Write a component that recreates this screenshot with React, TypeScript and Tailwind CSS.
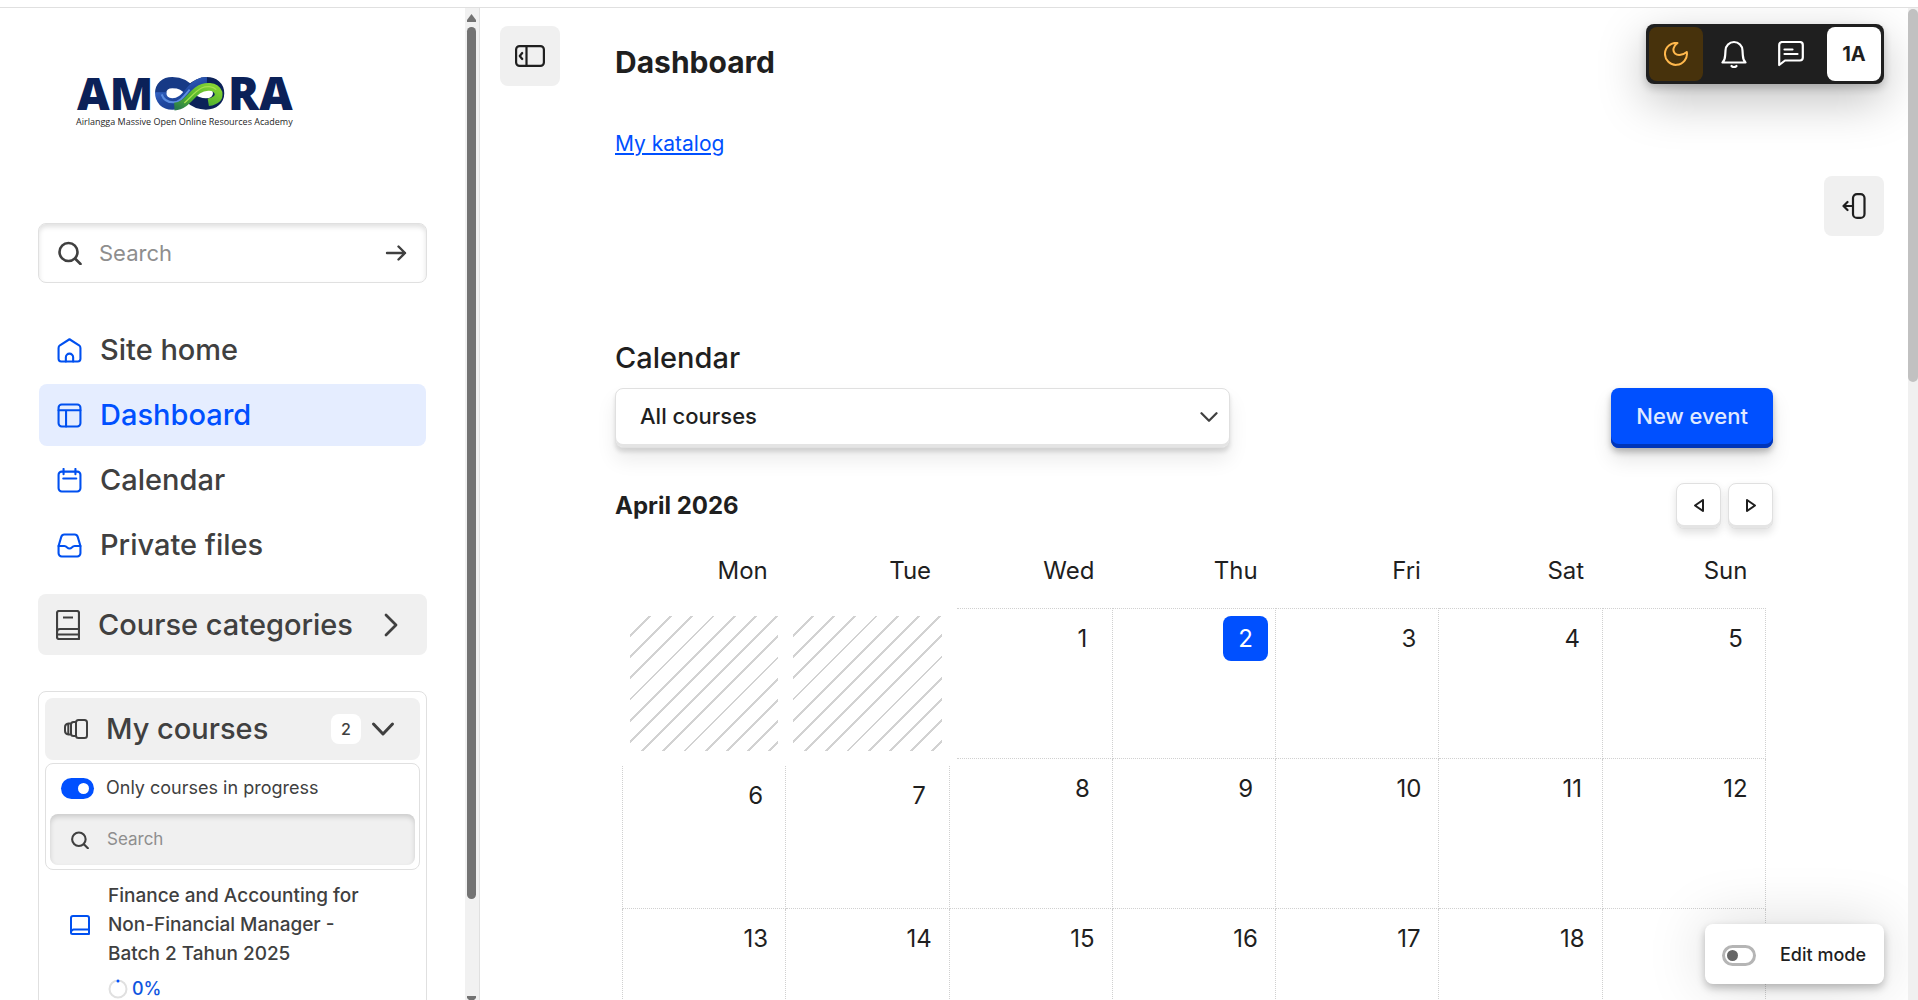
import React, { useState } from 'react';

interface IconProps {
  className?: string;
  strokeWidth?: number;
  children?: React.ReactNode;
}

const Icon: React.FC<IconProps> = ({ className, strokeWidth = 2, children }) => (
  <svg
    viewBox="0 0 24 24"
    fill="none"
    stroke="currentColor"
    strokeWidth={strokeWidth}
    strokeLinecap="round"
    strokeLinejoin="round"
    aria-hidden="true"
    className={className}
  >
    {children}
  </svg>
);

const navItems = [
  {
    label: 'Site home',
    icon: (
      <>
        <path d="M1.5 9.5Q1.5 8 2.8 7L12 1.2 21.2 7Q22.5 8 22.5 9.5V20a2.5 2.5 0 0 1-2.5 2.5H4A2.5 2.5 0 0 1 1.5 20z" />
        <path d="M8.5 22.5v-4a3.5 3.5 0 0 1 7 0v4" />
      </>
    ),
  },
  {
    label: 'Dashboard',
    icon: (
      <>
        <rect x="1.5" y="1.5" width="21" height="21" rx="3" />
        <path d="M1.5 7h21M8.7 7v15.5" />
      </>
    ),
  },
  {
    label: 'Calendar',
    icon: (
      <>
        <rect x="1.5" y="3.5" width="21" height="19" rx="3" />
        <path d="M6.3 .9v5M17.7 .9v5M6 10h12.5" />
      </>
    ),
  },
  {
    label: 'Private files',
    icon: (
      <>
        <path d="M1.5 12.5 4 4q.8-2.5 3-2.5h10q2.2 0 3 2.5l2.5 8.5v7a3 3 0 0 1-3 3h-15a3 3 0 0 1-3-3z" />
        <path d="M1.5 12.5h5.5q1.5 0 2.5 1.2 2.5 2.3 5 0 1-1.2 2.5-1.2h5.5" />
      </>
    ),
  },
];

const weekDays = ['Mon', 'Tue', 'Wed', 'Thu', 'Fri', 'Sat', 'Sun'];

const weeks: (number | null)[][] = [
  [null, null, 1, 2, 3, 4, 5],
  [6, 7, 8, 9, 10, 11, 12],
  [13, 14, 15, 16, 17, 18, 19],
];

const today = 2;

const Logo: React.FC = () => (
  <svg viewBox="0 0 226 54" className="w-[226px] h-[54px] overflow-visible" role="img" aria-label="AMOORA">
    <defs>
      <linearGradient id="logo-blue" x1="0" y1="0" x2="1" y2="1">
        <stop offset="0" stopColor="#3f73d6" />
        <stop offset="0.5" stopColor="#1f479f" />
        <stop offset="1" stopColor="#173a86" />
      </linearGradient>
      <linearGradient id="logo-green" x1="0" y1="1" x2="1" y2="0">
        <stop offset="0" stopColor="#2b7d4a" />
        <stop offset="0.4" stopColor="#4fb02f" />
        <stop offset="1" stopColor="#86d532" />
      </linearGradient>
    </defs>
    <text x="1" y="33" fontSize="45" fontWeight="800" fill="#0b2158" className="font-['Open_Sans',sans-serif]">AM</text>
    <g transform="translate(79 0) scale(0.333)" fill="none" strokeLinecap="butt">
      <path d="M105 62C120 76 135 81 153 81C176 81 191 68 191 49C191 29 176 17 155 17C133 17 119 28 105 41" stroke="#0b2158" strokeWidth="34" />
      <path d="M108 46C92 24 76 17 52 17C30 17 17 30 17 49" stroke="#173a86" strokeWidth="34" />
      <path d="M17 46C17 68 30 81 52 81C80 81 94 60 111 40C124 24 138 17 156 17" stroke="url(#logo-blue)" strokeWidth="34" />
      <path d="M20 52C26 70 40 76 55 76C76 76 90 54 104 38" stroke="#5b8de0" strokeWidth="6" />
      <path d="M58 89C92 87 106 56 128 40C150 25 182 25 191 48C193 62 184 72 160 76" stroke="url(#logo-green)" strokeWidth="23" />
      <path d="M88 78C108 60 122 42 140 33C156 26 174 28 184 38" stroke="#a5e04f" strokeWidth="4" />
    </g>
    <text x="152" y="33" fontSize="46" fontWeight="800" fill="#0b2158" className="font-['Open_Sans',sans-serif]">RA</text>
    <text x="0" y="48" fontSize="9" fill="#1f1f1f" className="font-['Open_Sans',sans-serif]">
      Airlangga Massive Open Online Resources Academy
    </text>
  </svg>
);

const Sidebar: React.FC = () => {
  const [onlyInProgress, setOnlyInProgress] = useState(true);

  return (
    <aside className="flex w-[480px] shrink-0 border-r border-[#e0e0e0]">
      <div className="flex-1 overflow-hidden px-[38px]">
        <a href="#" className="block pl-[38px] pt-[69px]">
          <Logo />
        </a>

        <form className="mt-[92px] flex h-[60px] items-center rounded-lg border border-[#e0e0e0] pr-[18px] pl-[19px] shadow-[inset_0_3px_5px_rgba(0,0,0,0.12)]">
          <Icon className="h-6 w-6 shrink-0 text-[#404040]" strokeWidth={2.6}>
            <circle cx="10.5" cy="11" r="9" />
            <path d="m17.5 18 5 5" />
          </Icon>
          <input
            aria-label="Search"
            placeholder="Search"
            className="ml-[17px] min-w-0 flex-1 bg-transparent text-[22px] text-[#404040] outline-none placeholder:text-[#8e8e8e]"
          />
          <button type="submit" aria-label="Go" className="text-[#404040]">
            <Icon className="h-6 w-6" strokeWidth={2.4}>
              <path d="M3 12h18M14.5 5.5 21 12l-6.5 6.5" />
            </Icon>
          </button>
        </form>

        <nav className="mt-9 flex flex-col gap-[3px] px-px">
          {navItems.map(item => (
            <a
              key={item.label}
              href="#"
              className={`flex h-[62px] items-center gap-[18px] rounded-lg px-[18px] text-[29px] font-medium ${
                item.label === 'Dashboard' ? 'bg-[#e5edff] text-[#0050ff]' : 'text-[#404040]'
              }`}
            >
              <Icon className="h-[25px] w-[25px] shrink-0 text-[#0050f0]">{item.icon}</Icon>
              {item.label}
            </a>
          ))}
        </nav>

        <button className="mt-[18px] flex h-[61px] w-full items-center rounded-lg bg-[#f0f0f0] pl-[18px] pr-6 text-[29px] font-medium text-[#404040]">
          <svg viewBox="0 0 24 30" fill="none" stroke="currentColor" strokeWidth="2.2" strokeLinejoin="round" className="h-[30px] w-6 shrink-0" aria-hidden="true">
            <path d="M1 27V3a2 2 0 0 1 2-2h18a2 2 0 0 1 2 2v26H3a2 2 0 0 1-2-2v-5a3 3 0 0 1 3-3h19M1 24.5h22M7 7.5h10" />
          </svg>
          <span className="ml-[18px] flex-1 text-left">Course categories</span>
          <Icon className="h-6 w-6" strokeWidth={2.8}>
            <path d="m7 2 10 10L7 22" />
          </Icon>
        </button>

        <section className="mt-9 rounded-lg border border-[#e0e0e0] p-1.5">
          <button className="flex h-[62px] w-full items-center rounded-lg bg-[#f0f0f0] pl-[19px] pr-[25px] text-[29px] font-medium text-[#404040]">
            <svg viewBox="0 0 24 20" fill="none" stroke="currentColor" strokeWidth="2" strokeLinejoin="round" className="h-5 w-6 shrink-0" aria-hidden="true">
              <rect x="12" y="1" width="11" height="18" rx="2.5" />
              <path d="M12 3H9.5Q7 3 7 5.5v9Q7 17 9.5 17H12M7 4.5H4.5Q1 5 1 8v4q0 3 3.5 3.5H7M4.3 5v10.2" />
            </svg>
            <span className="ml-[18px] flex-1 text-left">My courses</span>
            <span className="flex h-[30px] w-[30px] items-center justify-center rounded-lg bg-white text-base">2</span>
            <Icon className="ml-2.5 h-6 w-6" strokeWidth={3}>
              <path d="m2.5 7 9.5 10 9.5-10" />
            </Icon>
          </button>

          <div className="mt-[3px] rounded-lg border border-[#e0e0e0] p-1">
            <label className="flex h-[46px] items-center gap-3 pb-1.5 pl-[11px] text-lg text-[#404040]">
              <input
                type="checkbox"
                role="switch"
                checked={onlyInProgress}
                onChange={e => setOnlyInProgress(e.target.checked)}
                className="h-[21px] w-[33px] appearance-none rounded-full bg-gray-400 p-[5px] before:block before:h-[11px] before:w-[11px] before:rounded-full before:bg-white checked:bg-[#0050ff] checked:before:translate-x-3"
              />
              Only courses in progress
            </label>
            <div className="flex h-[51px] items-center rounded-lg bg-[#f0f0f0] pl-[21px] pr-4 shadow-[inset_0_3px_5px_rgba(0,0,0,0.15)]">
              <Icon className="h-[18px] w-[18px] shrink-0 text-[#404040]" strokeWidth={2.8}>
                <circle cx="10.5" cy="11" r="9" />
                <path d="m17.5 18 5 5" />
              </Icon>
              <input
                aria-label="Search courses"
                placeholder="Search"
                className="ml-[18px] min-w-0 flex-1 bg-transparent text-[17px] outline-none placeholder:text-[#8e8e8e]"
              />
            </div>
          </div>

          <a href="#" className="mt-[11px] flex items-center pl-[25px] text-[19px] leading-[29px] font-medium text-[#404040]">
            <svg viewBox="0 0 20 20" fill="none" stroke="currentColor" strokeWidth="2" strokeLinejoin="round" className="h-5 w-5 shrink-0 text-[#0050f0]" aria-hidden="true">
              <path d="M1 17.5V3a2 2 0 0 1 2-2h14a2 2 0 0 1 2 2v16H2.5A1.5 1.5 0 0 1 1 17.5a3 3 0 0 1 2.5-3H19" />
            </svg>
            <span className="ml-[18px] w-[260px]">Finance and Accounting for Non-Financial Manager - Batch 2 Tahun 2025</span>
          </a>
          <div className="mt-1.5 flex items-center gap-1 pl-[63px] text-lg leading-[29px] font-medium text-[#0f56e0]">
            <svg viewBox="0 0 20 20" fill="none" className="h-5 w-5" aria-hidden="true">
              <circle cx="10" cy="10" r="8.5" stroke="#e0e0e0" strokeWidth="2" />
              <circle cx="10" cy="2" r="1.5" fill="#0050ff" />
            </svg>
            0%
          </div>
        </section>
      </div>

      <div className="flex w-3.5 flex-col items-center bg-[#f1f1f1] pt-1.5 pr-0.5" aria-hidden="true">
        <svg viewBox="0 0 9 8" className="h-2 w-[9px] shrink-0">
          <path d="M4.5 0 9 6v2H0V6z" fill="#737373" />
        </svg>
        <div className="mt-[5px] h-[872px] w-[9px] shrink-0 rounded-full bg-[#737373]" />
        <div className="flex-1" />
        <svg viewBox="0 0 9 4" className="h-1 w-[9px] shrink-0">
          <path d="M0 0h9v2L7 4H2L0 2z" fill="#737373" />
        </svg>
      </div>
    </aside>
  );
};

const CalendarTable: React.FC = () => (
  <div className="mt-[18px] pr-[7px]">
    <table className="w-full table-fixed border-collapse text-2xl">
      <thead>
        <tr>
          {weekDays.map(day => (
            <th key={day} scope="col" className="h-[61px] pr-[18px] text-right align-top leading-[48px] font-normal">
              {day}
            </th>
          ))}
        </tr>
      </thead>
      <tbody>
        {weeks.map((week, i) => (
          <tr key={i}>
            {week.map((day, j) =>
              day === null ? (
                <td
                  key={j}
                  className="border-[15px] border-white bg-[repeating-linear-gradient(135deg,transparent_0_13px,#d2d2d2_13px_15px)] bg-clip-padding"
                />
              ) : (
                <td key={j} className="h-[150px] border border-dotted border-[#d0d0d0] pt-[7px] pr-[7px] align-top">
                  <a
                    href="#"
                    className={`ml-auto flex h-[45px] w-[45px] items-center justify-center rounded-lg pt-0.5 ${
                      day === today ? 'bg-[#0050ff] text-white' : ''
                    }`}
                  >
                    {day}
                  </a>
                </td>
              )
            )}
          </tr>
        ))}
      </tbody>
    </table>
  </div>
);

const UserBar: React.FC = () => (
  <div className="absolute top-4 right-6 flex h-[60px] items-center rounded-lg bg-[#1f1f1f] p-[3px] text-white shadow-[0_4px_8px_rgba(0,0,0,0.2),0_16px_48px_rgba(0,0,0,0.25)]">
    <button aria-label="Dark mode" className="flex h-[54px] w-[54px] items-center justify-center rounded-lg bg-[#47320c] text-[#ffb84d]">
      <Icon className="h-6 w-6">
        <path d="M13.5 1A11 11 0 1 0 22.8 10C19 13 14 14 11 11.5C8 8.5 9.5 4 13.5 1z" />
      </Icon>
    </button>
    <button aria-label="Notifications" className="flex h-[54px] w-[62px] items-center justify-center">
      <svg viewBox="0 0 26 28" fill="none" stroke="currentColor" strokeWidth="2.2" strokeLinejoin="round" strokeLinecap="round" className="h-7 w-[26px]" aria-hidden="true">
        <path d="M1.5 22.5h23Q22 20 21.8 15l-.3-4.5a8.5 8.5 0 0 0-17 0L4.2 15Q4 20 1.5 22.5z" />
        <path d="M10.5 26a3.3 3.3 0 0 0 5 0" />
      </svg>
    </button>
    <button aria-label="Messages" className="flex h-[54px] w-[52px] items-center justify-center">
      <svg viewBox="0 0 26 26" fill="none" stroke="currentColor" strokeWidth="2.2" strokeLinejoin="round" strokeLinecap="round" className="h-[26px] w-[26px]" aria-hidden="true">
        <path d="M1.2 24V4a3 3 0 0 1 3-3h17.6a3 3 0 0 1 3 3v12.5a3 3 0 0 1-3 3H7zM6.5 8.5h8M6.5 13h13" />
      </svg>
    </button>
    <button className="ml-2.5 flex h-[54px] w-[54px] items-center justify-center rounded-lg bg-white text-xl font-bold text-[#1f1f1f]">
      1A
    </button>
  </div>
);

const navButton =
  'flex h-[46px] w-[45px] items-center justify-center rounded-lg border border-[#e0e0e0] bg-white pb-0.5 shadow-[inset_0_-3px_0_#e4e4e4,0_4px_8px_rgba(0,0,0,0.12)]';

const App: React.FC = () => {
  const [editMode, setEditMode] = useState(false);

  return (
    <div className="flex h-screen flex-col overflow-hidden bg-white pt-[7px] font-[Inter,sans-serif] text-[#1f1f1f]">
      <div className="relative flex min-h-0 flex-1 border-t border-[#e0e0e0]">
        <Sidebar />

        <main className="relative min-w-0 flex-1 overflow-hidden px-[135px] pt-9">
          <button aria-label="Toggle sidebar" className="absolute top-[18px] left-5 flex h-[60px] w-[60px] items-center justify-center rounded-lg bg-[#f0f0f0]">
            <svg viewBox="0 0 30 22" fill="none" stroke="currentColor" strokeWidth="2.2" strokeLinecap="round" strokeLinejoin="round" className="h-[22px] w-[30px]" aria-hidden="true">
              <rect x="1.1" y="1.1" width="27.8" height="19.8" rx="3.5" />
              <path d="M11.5 1v20M7.2 8 4.8 11l2.4 3" />
            </svg>
          </button>
          <UserBar />
          <button aria-label="Open block drawer" className="absolute top-[168px] right-6 flex h-[60px] w-[60px] items-center justify-center rounded-lg bg-[#f0f0f0]">
            <svg viewBox="0 0 24 26" fill="none" stroke="currentColor" strokeWidth="2.2" strokeLinecap="round" strokeLinejoin="round" className="h-[26px] w-6" aria-hidden="true">
              <rect x="11" y="1.1" width="11.5" height="23.8" rx="4" />
              <path d="M11 13H1.5M5.5 9l-4 4 4 4" />
            </svg>
          </button>

          <h1 className="text-[30px] leading-9 font-bold">Dashboard</h1>
          <a href="#" className="mt-12 inline-block text-[21px] leading-8 text-[#0050ff] underline underline-offset-2">
            My katalog
          </a>

          <h2 className="mt-[180px] text-[29px] leading-9 font-medium">Calendar</h2>
          <div className="mt-3 flex items-start justify-between">
            <div className="relative w-[615px]">
              <select
                aria-label="Course"
                className="h-[60px] w-full appearance-none rounded-lg border border-[#e0e0e0] bg-white pb-1 pl-6 text-[22px] font-medium shadow-[inset_0_-3px_0_#e4e4e4,0_4px_4px_rgba(0,0,0,0.12),0_12px_20px_rgba(0,0,0,0.08)] outline-none"
              >
                <option>All courses</option>
              </select>
              <Icon className="pointer-events-none absolute top-5 right-3 h-[18px] w-[18px] text-[#404040]" strokeWidth={3}>
                <path d="m2 7 10 10L22 7" />
              </Icon>
            </div>
            <button className="h-[60px] rounded-lg bg-[#0050ff] px-[25px] pb-1 text-[22px] font-medium text-[#e0eaff] shadow-[inset_0_-4px_0_#0035b8,0_4px_6px_rgba(0,0,0,0.25),0_12px_20px_rgba(0,0,0,0.1)]">
              New event
            </button>
          </div>

          <div className="mt-[35px] flex items-center justify-between">
            <h3 className="text-2xl leading-8 font-bold">April 2026</h3>
            <div className="flex gap-[7px]">
              <button aria-label="Previous month" className={navButton}>
                <svg viewBox="0 0 10 13" fill="none" stroke="currentColor" strokeWidth="2" strokeLinejoin="round" className="h-[13px] w-2.5" aria-hidden="true">
                  <path d="M9 1v11L1 6.5z" />
                </svg>
              </button>
              <button aria-label="Next month" className={navButton}>
                <svg viewBox="0 0 10 13" fill="none" stroke="currentColor" strokeWidth="2" strokeLinejoin="round" className="h-[13px] w-2.5" aria-hidden="true">
                  <path d="M1 1v11l8-5.5z" />
                </svg>
              </button>
            </div>
          </div>

          <CalendarTable />

          <label className="absolute right-6 bottom-4 flex h-[60px] items-center gap-6 rounded-lg bg-white pt-0.5 pr-[18px] pl-[17px] text-lg font-medium shadow-[0_4px_8px_rgba(0,0,0,0.25),0_0_60px_rgba(0,0,0,0.15)]">
            <input
              type="checkbox"
              role="switch"
              checked={editMode}
              onChange={e => setEditMode(e.target.checked)}
              className="h-[21px] w-[34px] appearance-none rounded-full border-3 border-[#b5b5b5] p-0.5 before:block before:h-[11px] before:w-[11px] before:rounded-full before:bg-[#666] checked:before:translate-x-3"
            />
            Edit mode
          </label>
        </main>

        <div className="w-2.5 bg-[#f0f0f0] pt-px" aria-hidden="true">
          <div className="h-[373px] rounded-full bg-[#c1c1c1]" />
        </div>
      </div>
    </div>
  );
};

export default App;
